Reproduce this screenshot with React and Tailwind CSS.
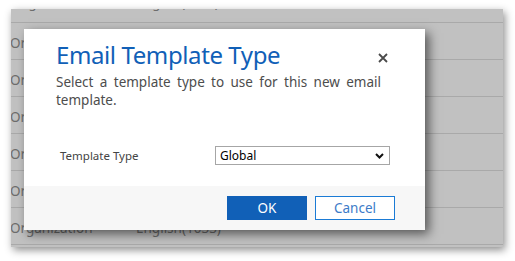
import React from 'react';

const rows = [
  { a: 'Organization', b: 'English(1033)' },
  { a: 'Organization', b: 'English(1033)' },
  { a: 'Organization', b: 'English(1033)' },
  { a: 'Organization', b: 'English(1033)' },
  { a: 'Organization', b: 'English(1033)' },
  { a: 'Organization', b: 'English(1033)' },
];

const App = () => {
  return (
    <div className="w-[515px] h-[261px] bg-white pt-[9px] pl-[11px] font-['Noto_Sans',sans-serif]">
      <div className="relative w-[492px] h-[238px] bg-[#c1c1c1] overflow-hidden shadow-[2px_3px_8px_rgba(0,0,0,0.45)]">
        {/* grid behind the dialog */}
        <div className="flex flex-col">
          <div className="h-[14px] border-b border-[#a9a9a9] flex text-[13px] text-[#6d6d6d] leading-[14px] overflow-hidden">
            <span className="-mt-[13px] w-[126px] pl-[2px]">Organization</span>
            <span className="-mt-[13px]">English(1033)</span>
          </div>
          {rows.map((r, i) => (
            <div key={i} className="h-[37px] border-b border-[#a9a9a9] flex items-center pt-[5px] text-[13.5px] text-[#6d6d6d]">
              <span className="w-[126px] -ml-[1px]">{r.a}</span>
              <span>{r.b}</span>
            </div>
          ))}
        </div>

        {/* dialog */}
        <div className="absolute left-[13px] top-[20px] w-[401px] h-[201px] bg-white flex flex-col shadow-[4px_4px_10px_rgba(0,0,0,0.55)]">
          <div className="flex-1 pl-[32px] pr-[44px] pt-[10px]">
            <div className="flex items-start justify-between">
              <h1 className="text-[24px] leading-[32px] tracking-[-0.4px] text-[#1160b7]">Email Template Type</h1>
              <span className="mt-[14px] -mr-[7px]">
                <svg width="10" height="10" viewBox="0 0 10 10">
                  <path d="M1 1L9 9M9 1L1 9" stroke="#4a4a4a" strokeWidth="1.8" />
                </svg>
              </span>
            </div>
            <p className="mt-[2px] text-[13.5px] leading-[18px] text-[#4d4d4d] text-justify">
              Select a template type to use for this new email template.
            </p>
            <div className="flex items-center mt-[37px] pl-[4px]">
              <span className="w-[155px] shrink-0 text-[11.5px] text-[#444]">Template Type</span>
              <div className="w-[175px] shrink-0 h-[19px] border border-[#a6a6a6] flex items-center justify-between pl-[4px] pr-[5px]">
                <span className="text-[12px] text-black">Global</span>
                <svg width="9" height="6" viewBox="0 0 9 6">
                  <path d="M1 1L4.5 4.5L8 1" stroke="#111" strokeWidth="2" fill="none" />
                </svg>
              </div>
            </div>
          </div>
          <div className="h-[44px] bg-[#f7f7f7] flex items-start justify-end gap-[8px] pt-[10px] pr-[30px]">
            <button className="w-[80px] h-[24px] bg-[#1160b7] text-white text-[13.5px]">OK</button>
            <button className="w-[80px] h-[24px] border border-[#1b7bd5] bg-white text-[#3c7bc8] text-[13.5px]">Cancel</button>
          </div>
        </div>
      </div>
    </div>
  );
};

export default App;
